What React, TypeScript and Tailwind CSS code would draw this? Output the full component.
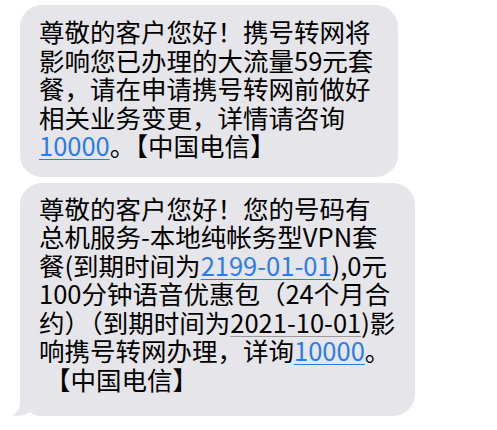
const link = 'text-[#2a7de6] underline decoration-[#2a7de6] decoration-1 underline-offset-[3px]'

function Bubble({ lines, width, tail, className }: { lines: React.ReactNode[]; width: string; tail?: boolean; className: string }) {
  return (
    <div className={`relative rounded-[22px] bg-[#e5e5ea] pl-[19px] ${width} ${className}`}>
      {lines.map((l, i) => (
        <div key={i} className="whitespace-nowrap">
          {l}
        </div>
      ))}
      {tail && (
        <svg className="absolute -left-[12px] bottom-0" width="40" height="26" viewBox="0 0 40 26">
          <path d="M12 0 L12 13 C12 19 9 23 4 25.6 C12 26.5 18 25 22 22 C26 25 30 26 36 26 L36 0 Z" fill="#e5e5ea" />
        </svg>
      )}
    </div>
  )
}

export default function App() {
  return (
    <div
      className="w-[497px] h-[430px] bg-white pt-[5px] pl-[20px] flex flex-col gap-[6px] text-black text-[25.5px] leading-[28.5px]"
      style={{ fontFamily: '"Noto Sans CJK SC", "Noto Sans", sans-serif' }}
    >
      <Bubble
        width="w-[378px]"
        className="pt-[12px] pb-[17px]"
        lines={[
          '尊敬的客户您好！携号转网将',
          '影响您已办理的大流量59元套',
          '餐，请在申请携号转网前做好',
          '相关业务变更，详情请咨询',
          <>
            <span className={link}>10000</span>。【中国电信】
          </>,
        ]}
      />
      <Bubble
        width="w-[395px]"
        className="pt-[11px] pb-[23px]"
        tail
        lines={[
          '尊敬的客户您好！您的号码有',
          '总机服务-本地纯帐务型VPN套',
          <>
            餐(到期时间为<span className={link}>2199-01-01</span>),0元
          </>,
          '100分钟语音优惠包（24个月合',
          <>
            约）（到期时间为<span className="underline decoration-[#9a9aa0] decoration-1 underline-offset-[3px]">2021-10-01</span>)影
          </>,
          <>
            响携号转网办理，详询<span className={link}>10000</span>。
          </>,
          <span className="pl-[6px]">【中国电信】</span>,
        ]}
      />
    </div>
  )
}
